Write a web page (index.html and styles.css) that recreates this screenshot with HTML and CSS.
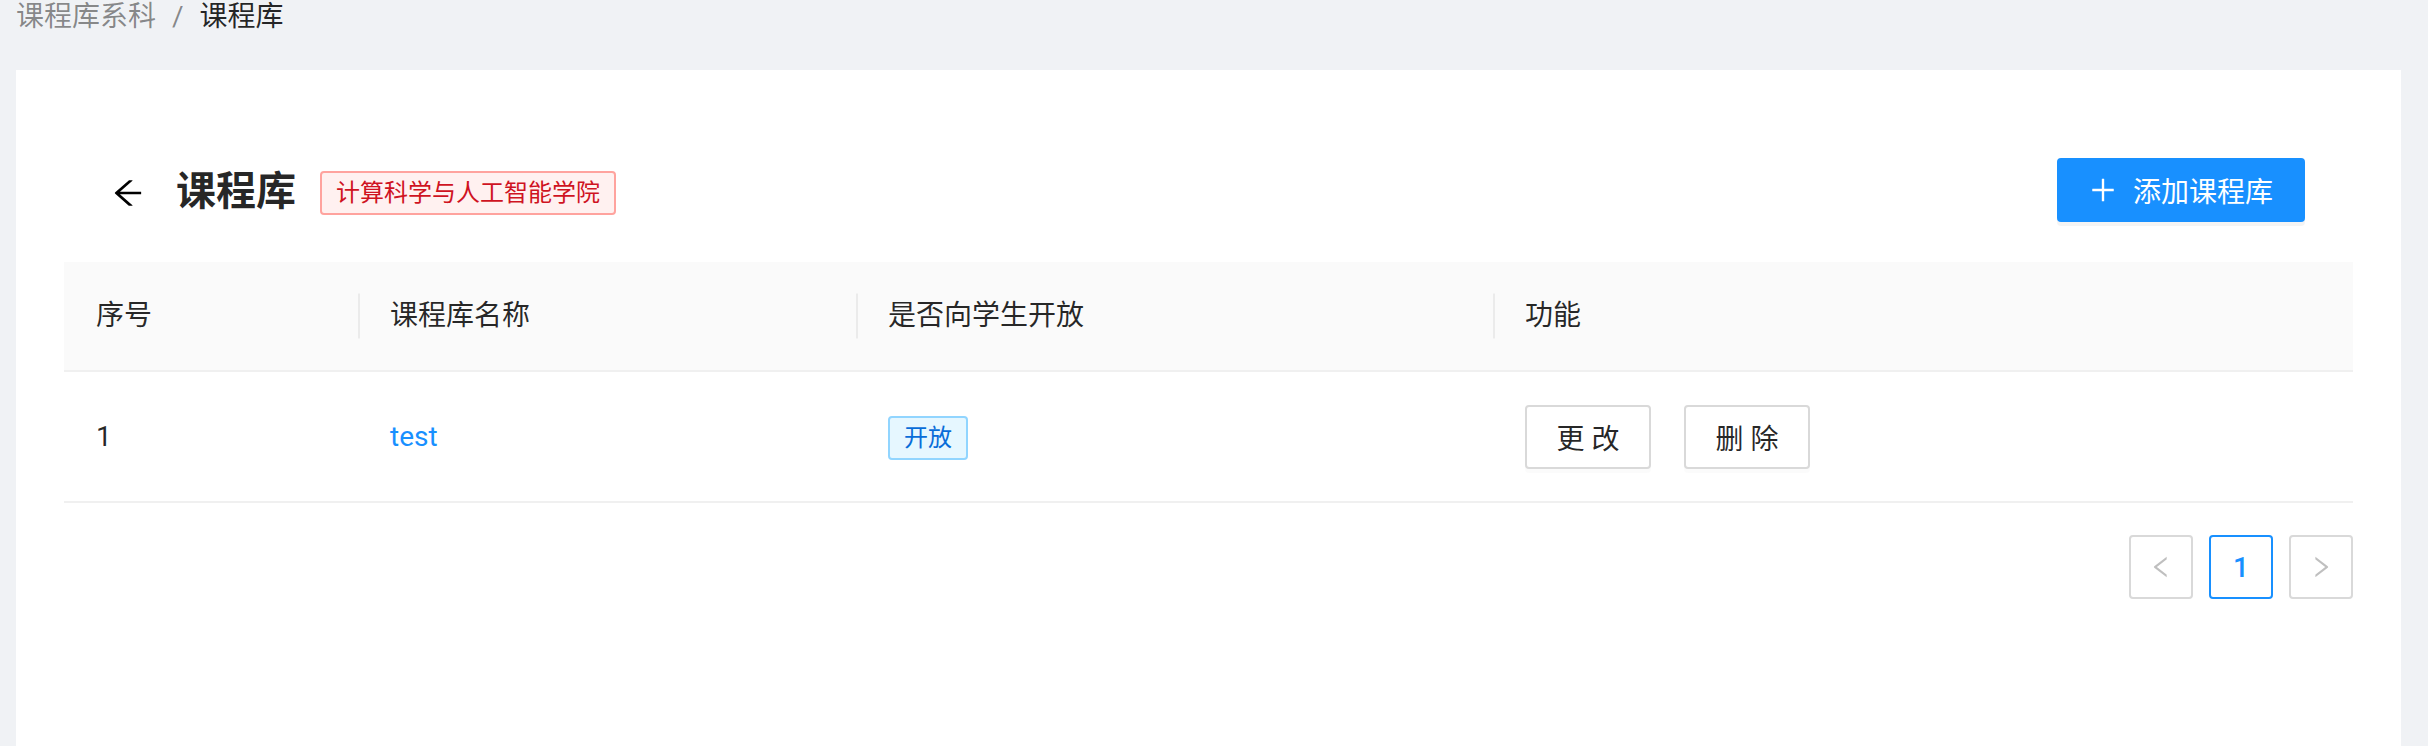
FILE: index.html
```html
<!DOCTYPE html>
<html lang="zh-CN">
<head>
<meta charset="utf-8">
<title>课程库</title>
<link rel="stylesheet" href="styles.css">
</head>
<body>
<nav class="breadcrumb">
  <span class="crumb">课程库系科</span>
  <span class="sep">/</span>
  <span class="crumb current">课程库</span>
</nav>
<main class="card">
  <div class="page-header">
    <div class="heading">
      <div class="heading-left">
        <span class="back">
          <svg viewBox="64 64 896 896" width="32" height="32" fill="currentColor"><path d="M872 474H286.9l350.2-304c5.6-4.9 2.2-14-5.2-14h-88.5c-3.9 0-7.6 1.4-10.5 3.9L155 487.8a31.960 31.960 0 000 48.3L535.1 866c1.5 1.3 3.3 2 5.2 2h91.5c7.4 0 10.8-9.2 5.2-14L286.9 550H872c4.4 0 8-3.6 8-8v-60c0-4.4-3.6-8-8-8z"/></svg>
        </span>
        <span class="title">课程库</span>
        <span class="tag tag-red">计算科学与人工智能学院</span>
      </div>
      <button class="btn btn-primary">
        <svg class="btn-icon" viewBox="64 64 896 896" width="28" height="28" fill="currentColor"><path d="M482 152h60q8 0 8 8v704q0 8-8 8h-60q-8 0-8-8V160q0-8 8-8z"/><path d="M176 474h672q8 0 8 8v60q0 8-8 8H176q-8 0-8-8v-60q0-8 8-8z"/></svg>
        <span>添加课程库</span>
      </button>
    </div>
  </div>

  <table class="table">
    <colgroup>
      <col class="c1"><col class="c2"><col class="c3"><col>
    </colgroup>
    <thead>
      <tr>
        <th>序号</th>
        <th class="divided">课程库名称</th>
        <th class="divided">是否向学生开放</th>
        <th class="divided">功能</th>
      </tr>
    </thead>
    <tbody>
      <tr>
        <td>1</td>
        <td><a class="link">test</a></td>
        <td><span class="tag tag-blue">开放</span></td>
        <td>
          <div class="actions">
            <button class="btn btn-default">更 改</button>
            <button class="btn btn-default">删 除</button>
          </div>
        </td>
      </tr>
    </tbody>
  </table>

  <div class="pagination">
    <span class="page-item disabled">
      <svg viewBox="64 64 896 896" width="24" height="24" fill="currentColor"><path d="M724 218.3V141c0-6.7-7.7-10.4-12.9-6.3L260.3 486.8a31.86 31.86 0 000 50.3l450.8 352.1c5.3 4.1 12.9.4 12.9-6.3v-77.3c0-4.9-2.3-9.6-6.1-12.6l-360-281 360-281.1c3.8-3 6.1-7.7 6.1-12.6z"/></svg>
    </span>
    <span class="page-item active">1</span>
    <span class="page-item disabled">
      <svg viewBox="64 64 896 896" width="24" height="24" fill="currentColor"><path d="M765.7 486.8L314.9 134.7A7.97 7.97 0 00302 141v77.3c0 4.9 2.3 9.6 6.1 12.6l360 281.1-360 281.1c-3.8 3-6.1 7.7-6.1 12.6V883c0 4.4 5.6 7.1 10.2 4.6L765.7 537.2a31.96 31.96 0 000-50.4z"/></svg>
    </span>
  </div>
</main>
</body>
</html>
```

FILE: styles.css
```css
* { box-sizing: border-box; }

html, body {
  margin: 0;
  padding: 0;
}

body {
  background: #f0f2f5;
  font-family: Roboto, "Noto Sans CJK SC", sans-serif;
  font-size: 28px;
  color: rgba(0, 0, 0, 0.85);
  overflow: hidden;
  height: 746px;
}

.breadcrumb {
  display: flex;
  align-items: center;
  height: 34px;
  line-height: 34px;
  padding-left: 16px;
  margin-bottom: 36px;
  color: rgba(0, 0, 0, 0.45);
}

.sep {
  margin: 0 16px;
}

.crumb.current {
  color: rgba(0, 0, 0, 0.85);
}

.card {
  background: #fff;
  margin: 0 27px 0 16px;
  padding: 48px;
  min-height: 700px;
}

.page-header {
  padding: 32px 48px;
}

.heading {
  display: flex;
  align-items: center;
  justify-content: space-between;
  margin: 8px 0;
}

.heading-left {
  display: flex;
  align-items: center;
  height: 64px;
}

.back {
  display: flex;
  align-items: center;
  color: #000;
  margin-right: 32px;
  margin-top: 6px;
}

.title {
  font-size: 40px;
  font-weight: 700;
  line-height: 64px;
  color: rgba(0, 0, 0, 0.85);
  margin-right: 24px;
  margin-top: 4px;
}

.tag {
  display: inline-block;
  font-size: 24px;
  line-height: 40px;
  padding: 0 14px;
  border: 2px solid;
  border-radius: 4px;
  white-space: nowrap;
}

.tag-red {
  color: #cf1322;
  background: #fff1f0;
  border-color: #ffa39e;
  margin-top: 6px;
}

.tag-blue {
  color: #096dd9;
  background: #e6f7ff;
  border-color: #91d5ff;
}

.btn {
  display: inline-flex;
  align-items: center;
  justify-content: center;
  height: 64px;
  padding: 0 30px;
  font-family: inherit;
  font-size: 28px;
  border: 2px solid #d9d9d9;
  border-radius: 4px;
  background: #fff;
  color: rgba(0, 0, 0, 0.85);
  white-space: pre;
  cursor: pointer;
}

.btn-primary {
  background: #1890ff;
  border-color: #1890ff;
  color: #fff;
  box-shadow: 0 4px 0 rgba(0, 0, 0, 0.045);
}

.btn-icon {
  margin-right: 16px;
}

.btn-default {
  box-shadow: 0 4px 0 rgba(0, 0, 0, 0.015);
  width: 126px;
}

.table {
  width: 100%;
  border-collapse: collapse;
  table-layout: fixed;
}

.c1 { width: 294px; }
.c2 { width: 498px; }
.c3 { width: 637px; }

.table th {
  position: relative;
  background: #fafafa;
  font-weight: 400;
  text-align: left;
  line-height: 44px;
  padding: 32px 32px;
  border-bottom: 2px solid #f0f0f0;
  color: rgba(0, 0, 0, 0.85);
}

.table th.divided::before {
  content: "";
  position: absolute;
  left: 0;
  top: 50%;
  width: 2px;
  height: 45px;
  transform: translateY(-50%);
  background: rgba(0, 0, 0, 0.06);
}

.table td {
  padding: 33px 32px 32px;
  line-height: 44px;
  border-bottom: 2px solid #f0f0f0;
  vertical-align: middle;
}

.link {
  color: #1890ff;
  cursor: pointer;
}

.actions {
  display: flex;
  gap: 33px;
}

.pagination {
  display: flex;
  justify-content: flex-end;
  gap: 16px;
  margin-top: 32px;
}

.page-item {
  display: flex;
  align-items: center;
  justify-content: center;
  width: 64px;
  height: 64px;
  border: 2px solid #d9d9d9;
  border-radius: 4px;
  background: #fff;
  font-size: 28px;
}

.page-item.disabled {
  color: rgba(0, 0, 0, 0.25);
}

.page-item.active {
  border-color: #1890ff;
  color: #1890ff;
  font-weight: 500;
}
```
